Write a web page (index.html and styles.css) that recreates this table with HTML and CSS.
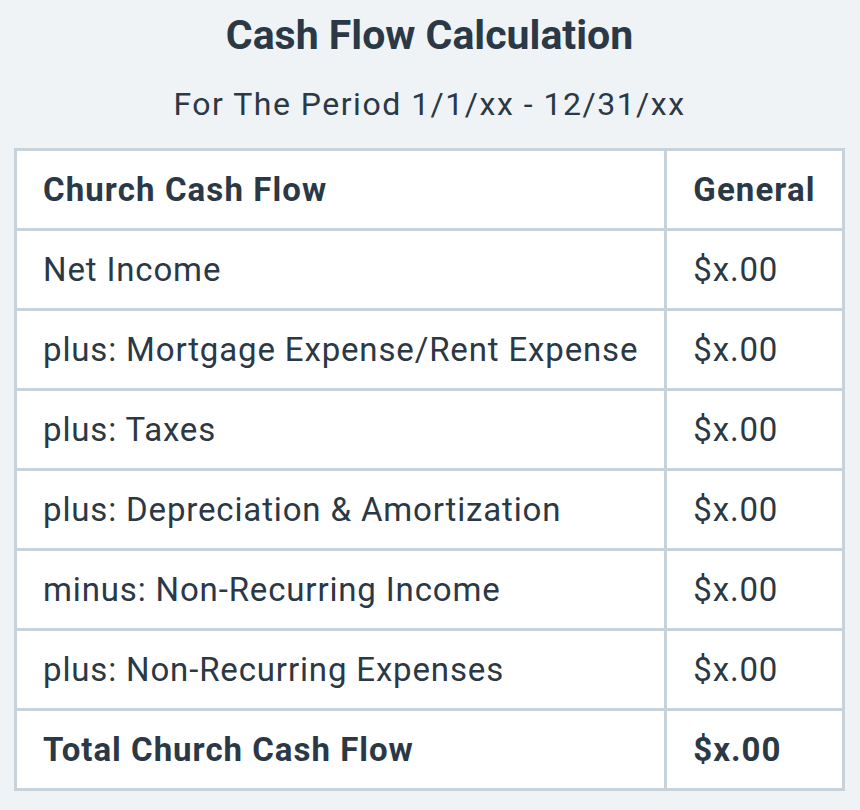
FILE: index.html
```html
<!DOCTYPE html>
<html>
<head>
<meta charset="utf-8">
<link rel="stylesheet" href="styles.css">
</head>
<body>
<div class="page">
  <h1 class="title">Cash Flow Calculation</h1>
  <p class="subtitle">For The Period 1/1/xx - 12/31/xx</p>
  <table class="cf-table">
    <thead>
      <tr><th class="col-label">Church Cash Flow</th><th class="col-val">General</th></tr>
    </thead>
    <tbody>
      <tr><td>Net Income</td><td>$x.00</td></tr>
      <tr><td>plus: Mortgage Expense/Rent Expense</td><td>$x.00</td></tr>
      <tr><td>plus: Taxes</td><td>$x.00</td></tr>
      <tr><td>plus: Depreciation &amp; Amortization</td><td>$x.00</td></tr>
      <tr><td>minus: Non-Recurring Income</td><td>$x.00</td></tr>
      <tr><td>plus: Non-Recurring Expenses</td><td>$x.00</td></tr>
      <tr class="total"><td>Total Church Cash Flow</td><td>$x.00</td></tr>
    </tbody>
  </table>
</div>
</body>
</html>
```
FILE: styles.css
```css
html, body {
  margin: 0;
  padding: 0;
  background: #eff3f6;
}
body {
  font-family: Roboto, "Liberation Sans", sans-serif;
  color: #2b3845;
}
.page {
  padding: 10px 15px 0 14px;
}
.title {
  margin: 0;
  text-align: center;
  font-size: 41px;
  line-height: 50px;
  font-weight: 700;
}
.subtitle {
  margin: 24px 0 0;
  text-align: center;
  font-size: 32px;
  line-height: 40px;
  font-weight: 400;
  letter-spacing: 1.5px;
}
.cf-table {
  margin-top: 24px;
  width: 100%;
  border-collapse: collapse;
  background: #ffffff;
  border: 3px solid #c8d2da;
}
.cf-table th,
.cf-table td {
  border: 3px solid #c8d2da;
  padding: 20px 26px;
  font-size: 33px;
  line-height: 37px;
  text-align: left;
  white-space: nowrap;
  letter-spacing: 0.85px;
}
.cf-table th {
  font-weight: 700;
  letter-spacing: 1.1px;
}
.cf-table .col-val {
  width: 125px;
}
.cf-table .total td {
  font-weight: 700;
  letter-spacing: 1px;
}
```
